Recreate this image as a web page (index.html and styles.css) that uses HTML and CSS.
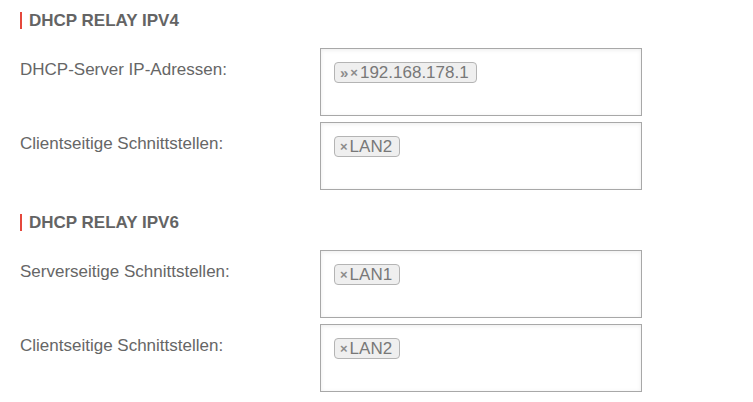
FILE: index.html
```html
<!DOCTYPE html>
<html lang="de">
<head>
<meta charset="utf-8">
<title>DHCP Relay</title>
<link rel="stylesheet" href="styles.css">
</head>
<body>
<section class="group">
  <h2 class="group-title">DHCP RELAY IPV4</h2>
  <div class="rows">
    <div class="row">
      <label class="label">DHCP-Server IP-Adressen:</label>
      <div class="field">
        <span class="tag"><span class="tag-more">»</span><span class="tag-x">×</span>192.168.178.1</span>
      </div>
    </div>
    <div class="row">
      <label class="label">Clientseitige Schnittstellen:</label>
      <div class="field">
        <span class="tag"><span class="tag-x">×</span>LAN2</span>
      </div>
    </div>
  </div>
</section>
<section class="group group-second">
  <h2 class="group-title">DHCP RELAY IPV6</h2>
  <div class="rows">
    <div class="row">
      <label class="label">Serverseitige Schnittstellen:</label>
      <div class="field">
        <span class="tag"><span class="tag-x">×</span>LAN1</span>
      </div>
    </div>
    <div class="row">
      <label class="label">Clientseitige Schnittstellen:</label>
      <div class="field">
        <span class="tag"><span class="tag-x">×</span>LAN2</span>
      </div>
    </div>
  </div>
</section>
</body>
</html>
```
FILE: styles.css
```css
html, body {
  margin: 0;
  padding: 0;
  background: #ffffff;
}
body {
  padding: 12px 20px 0 20px;
  font-family: "Liberation Sans", Arial, sans-serif;
  color: #666666;
}
.group-second {
  margin-top: 24px;
}
.group-title {
  margin: 0 0 19px 0;
  border-left: 2px solid #e5483c;
  padding-left: 7px;
  font-size: 17px;
  line-height: 17px;
  font-weight: bold;
  color: #646464;
}
.rows {
  display: flex;
  flex-direction: column;
  gap: 6px;
}
.row {
  display: grid;
  grid-template-columns: 300px 322px;
  align-items: start;
}
.label {
  padding-top: 12px;
  font-size: 17px;
  line-height: 20px;
  color: #666666;
}
.field {
  box-sizing: border-box;
  height: 68px;
  border: 1px solid #a8a8a8;
  background: #ffffff;
  box-shadow: inset 0 1px 4px rgba(0, 0, 0, 0.08);
  padding: 13px;
  display: flex;
  align-items: flex-start;
}
.tag {
  display: inline-flex;
  align-items: center;
  height: 21px;
  box-sizing: border-box;
  border: 1px solid #b4b4b4;
  border-radius: 4px;
  background: #efefef;
  padding: 0 7px 0 5px;
  font-size: 17px;
  line-height: 19px;
  color: #787878;
}
.tag-more {
  font-size: 15px;
  font-weight: bold;
  color: #8c8c8c;
  margin-right: 2px;
}
.tag-x {
  font-size: 13px;
  font-weight: bold;
  color: #8c8c8c;
  margin-right: 2px;
}
```
